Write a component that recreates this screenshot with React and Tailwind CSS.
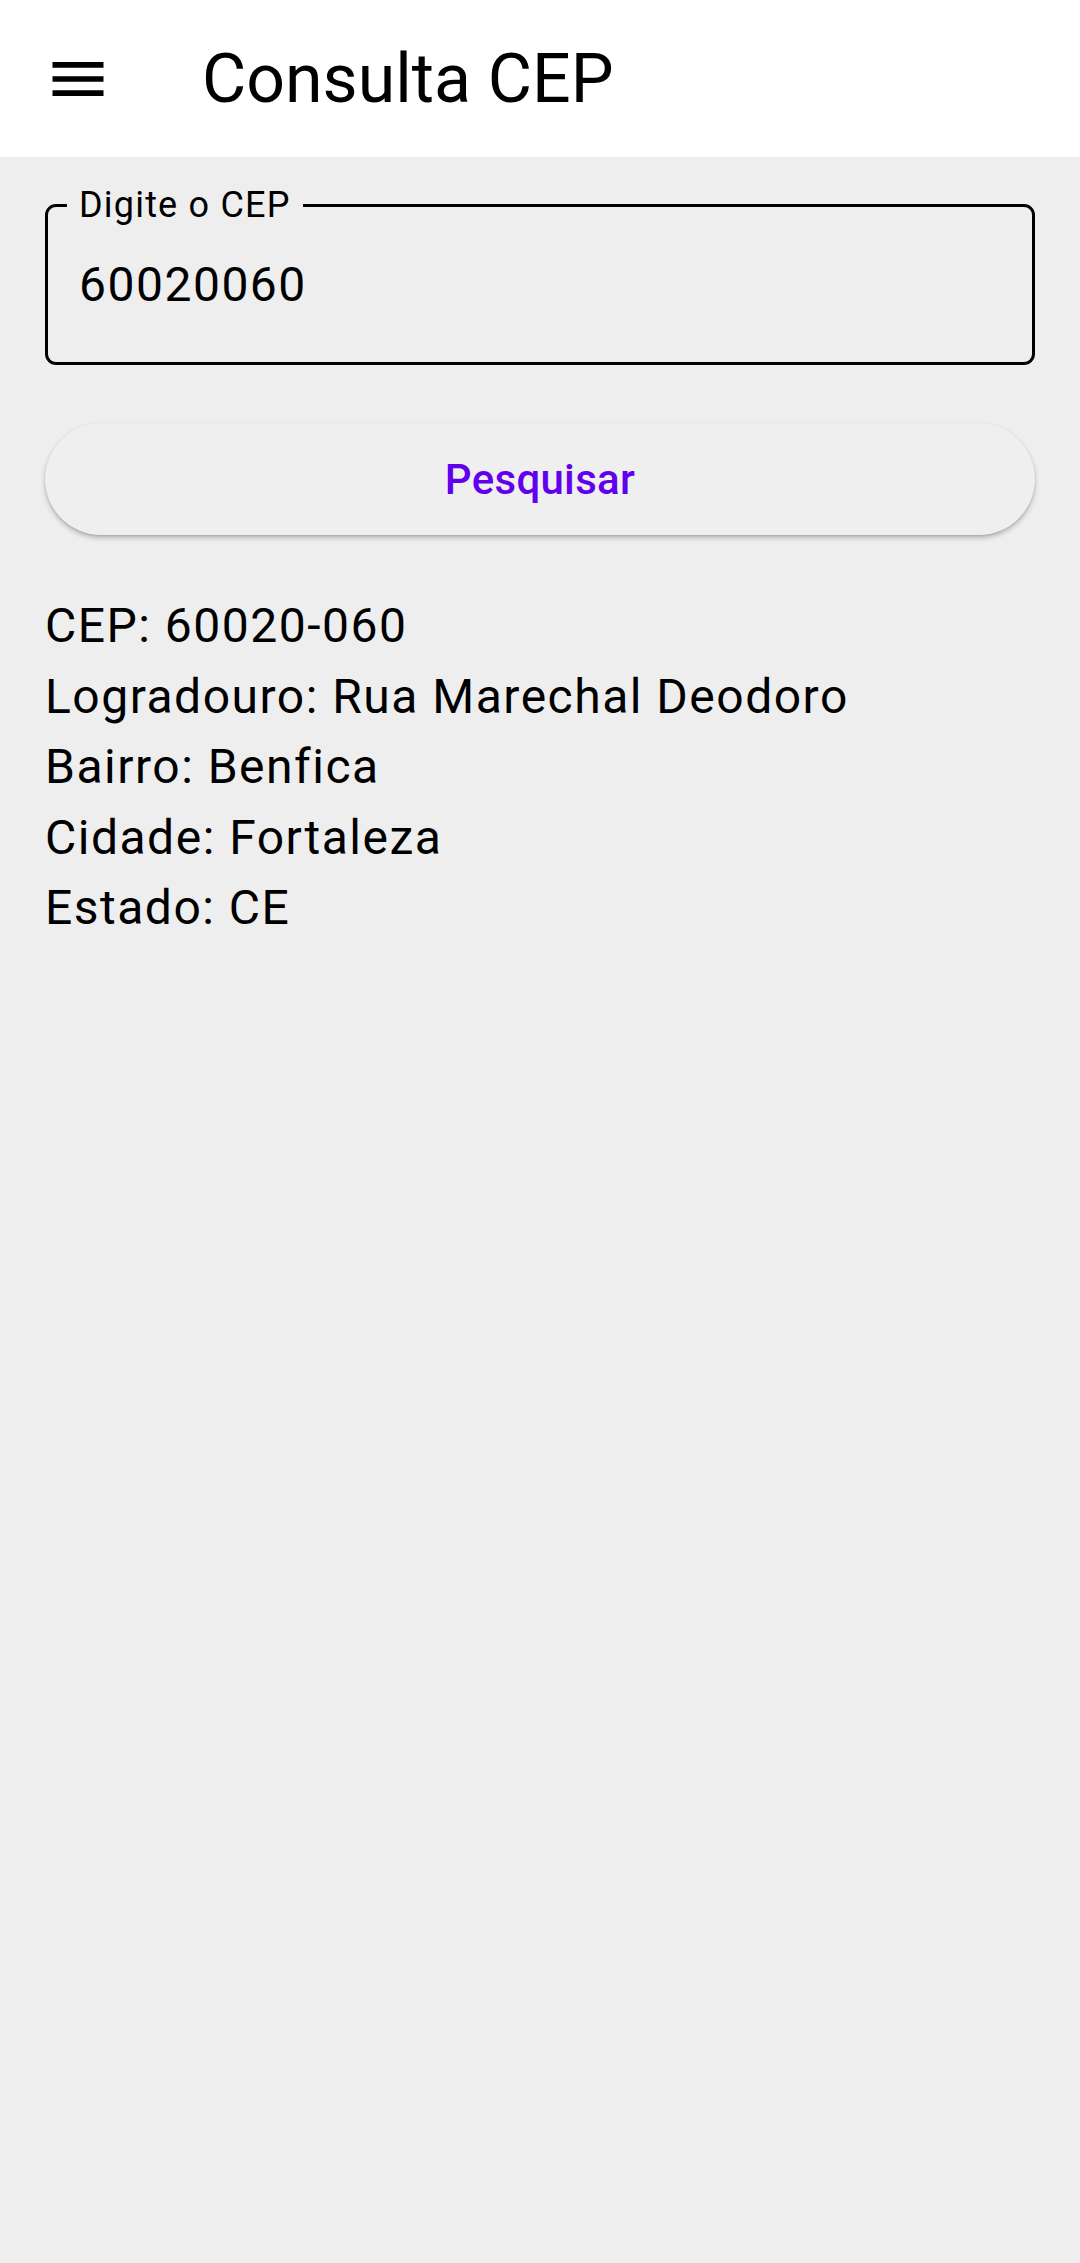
import React from "react";

const fields = [
  ["CEP", "60020-060"],
  ["Logradouro", "Rua Marechal Deodoro"],
  ["Bairro", "Benfica"],
  ["Cidade", "Fortaleza"],
  ["Estado", "CE"],
];

function MenuIcon() {
  return (
    <svg viewBox="0 0 24 24" className="h-[68px] w-[68px]" fill="currentColor">
      <path d="M3 18h18v-2H3v2zm0-5h18v-2H3v2zm0-7v2h18V6H3z" />
    </svg>
  );
}

export default function App() {
  return (
    <div
      className="min-h-screen bg-[#eeeeee] text-black"
      style={{ fontFamily: "Roboto, 'Noto Sans', sans-serif" }}
    >
      <header className="flex h-[157px] items-center bg-white pl-[44px]">
        <MenuIcon />
        <h1 className="ml-[90px] text-[68px] leading-none font-normal">Consulta CEP</h1>
      </header>

      <main className="px-[45px] pt-[30px]">
        <fieldset className="rounded-[11px] border-[3px] border-black pt-[34px] pb-[49px]">
          <legend className="ml-[19px] px-[12px] text-[36px] leading-[36px] tracking-[1.2px]">
            Digite o CEP
          </legend>
          <div className="pl-[31px] text-[48px] leading-[56px] tracking-[1.5px]">60020060</div>
        </fieldset>

        <button className="mt-[58px] flex h-[112px] w-full items-center justify-center rounded-full bg-[#efefef] shadow-[0_3px_5px_rgba(0,0,0,0.22),0_1px_2px_rgba(0,0,0,0.12)]">
          <span className="text-[42px] font-medium tracking-[0.3px] text-[#6200ee]">Pesquisar</span>
        </button>

        <div className="mt-[56px] text-[48px] leading-[70.5px] tracking-[1.5px]">
          {fields.map(([k, v]) => (
            <p key={k}>
              {k}: {v}
            </p>
          ))}
        </div>
      </main>
    </div>
  );
}
